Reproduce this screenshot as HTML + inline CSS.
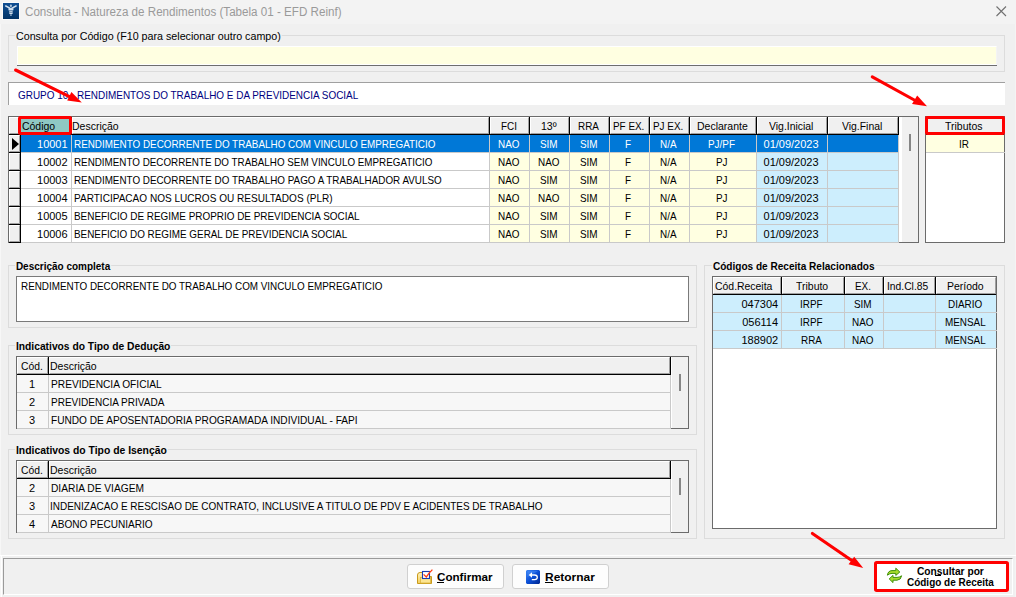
<!DOCTYPE html>
<html><head><meta charset="utf-8"><style>
html,body{margin:0;padding:0;}
body{width:1016px;height:597px;overflow:hidden;position:relative;background:#f0f0f0;font-family:'Liberation Sans', sans-serif;}
body>div,body>svg{position:absolute;}
.t{white-space:pre;}
</style></head><body>
<div style="left:0px;top:0px;width:1016px;height:24px;background:#f3f3f3"></div>
<div style="left:0px;top:24px;width:1px;height:573px;background:#f7f7f7"></div>
<div style="left:1015px;top:24px;width:1px;height:573px;background:#f4f4f4"></div>
<div style="left:8px;top:35px;width:997px;height:37px;border:1px solid #dcdcdc;box-sizing:border-box"></div>
<div style="left:17px;top:46px;width:980px;height:19px;background:#ffffe1;border:1px solid #fff;border-right-color:#f4f4f4;box-sizing:border-box"></div>
<div style="left:17px;top:65px;width:980px;height:1px;background:#6e6e6e"></div>
<div style="left:8px;top:82px;width:997px;height:23px;background:#fff;border-top:1px solid #a0a0a0;border-left:1px solid #a0a0a0;box-sizing:border-box"></div>
<div style="left:8px;top:116px;width:911px;height:127px;background:#fff;border:1px solid #6b6b6b;box-sizing:border-box"></div>
<div style="left:9px;top:117px;width:11px;height:17px;background:#f0f0f0;border-top:1px solid #fff;border-left:1px solid #fff;border-bottom:1px solid #a0a0a0;border-right:1px solid #a0a0a0;box-sizing:border-box"></div>
<div style="left:20px;top:117px;width:1px;height:18px;background:#000"></div>
<div style="left:21px;top:117px;width:50px;height:17px;background:#f0f0f0;border-top:1px solid #fff;border-left:1px solid #fff;border-bottom:1px solid #a0a0a0;border-right:1px solid #a0a0a0;box-sizing:border-box"></div>
<div style="left:71px;top:117px;width:1px;height:18px;background:#000"></div>
<div style="left:72px;top:117px;width:417px;height:17px;background:#f0f0f0;border-top:1px solid #fff;border-left:1px solid #fff;border-bottom:1px solid #a0a0a0;border-right:1px solid #a0a0a0;box-sizing:border-box"></div>
<div style="left:489px;top:117px;width:1px;height:18px;background:#000"></div>
<div style="left:490px;top:117px;width:39px;height:17px;background:#f0f0f0;border-top:1px solid #fff;border-left:1px solid #fff;border-bottom:1px solid #a0a0a0;border-right:1px solid #a0a0a0;box-sizing:border-box"></div>
<div style="left:529px;top:117px;width:1px;height:18px;background:#000"></div>
<div style="left:530px;top:117px;width:39px;height:17px;background:#f0f0f0;border-top:1px solid #fff;border-left:1px solid #fff;border-bottom:1px solid #a0a0a0;border-right:1px solid #a0a0a0;box-sizing:border-box"></div>
<div style="left:569px;top:117px;width:1px;height:18px;background:#000"></div>
<div style="left:570px;top:117px;width:39px;height:17px;background:#f0f0f0;border-top:1px solid #fff;border-left:1px solid #fff;border-bottom:1px solid #a0a0a0;border-right:1px solid #a0a0a0;box-sizing:border-box"></div>
<div style="left:609px;top:117px;width:1px;height:18px;background:#000"></div>
<div style="left:610px;top:117px;width:39px;height:17px;background:#f0f0f0;border-top:1px solid #fff;border-left:1px solid #fff;border-bottom:1px solid #a0a0a0;border-right:1px solid #a0a0a0;box-sizing:border-box"></div>
<div style="left:649px;top:117px;width:1px;height:18px;background:#000"></div>
<div style="left:650px;top:117px;width:39px;height:17px;background:#f0f0f0;border-top:1px solid #fff;border-left:1px solid #fff;border-bottom:1px solid #a0a0a0;border-right:1px solid #a0a0a0;box-sizing:border-box"></div>
<div style="left:689px;top:117px;width:1px;height:18px;background:#000"></div>
<div style="left:690px;top:117px;width:66px;height:17px;background:#f0f0f0;border-top:1px solid #fff;border-left:1px solid #fff;border-bottom:1px solid #a0a0a0;border-right:1px solid #a0a0a0;box-sizing:border-box"></div>
<div style="left:756px;top:117px;width:1px;height:18px;background:#000"></div>
<div style="left:757px;top:117px;width:70px;height:17px;background:#f0f0f0;border-top:1px solid #fff;border-left:1px solid #fff;border-bottom:1px solid #a0a0a0;border-right:1px solid #a0a0a0;box-sizing:border-box"></div>
<div style="left:827px;top:117px;width:1px;height:18px;background:#000"></div>
<div style="left:828px;top:117px;width:70px;height:17px;background:#f0f0f0;border-top:1px solid #fff;border-left:1px solid #fff;border-bottom:1px solid #a0a0a0;border-right:1px solid #a0a0a0;box-sizing:border-box"></div>
<div style="left:898px;top:117px;width:1px;height:18px;background:#000"></div>
<div style="left:9px;top:134px;width:890px;height:1px;background:#000"></div>
<div style="left:9px;top:135px;width:11px;height:17px;background:#f0f0f0;border-top:1px solid #fff;border-left:1px solid #fff;border-bottom:1px solid #a0a0a0;border-right:1px solid #a0a0a0;box-sizing:border-box"></div>
<div style="left:20px;top:135px;width:1px;height:18px;background:#000"></div>
<div style="left:9px;top:152px;width:11px;height:1px;background:#000"></div>
<div style="left:21px;top:135px;width:50px;height:17px;background:#0078d7"></div>
<div style="left:71px;top:135px;width:1px;height:18px;background:#c9c9c9"></div>
<div style="left:72px;top:135px;width:417px;height:17px;background:#0078d7"></div>
<div style="left:489px;top:135px;width:1px;height:18px;background:#c9c9c9"></div>
<div style="left:490px;top:135px;width:39px;height:17px;background:#0078d7"></div>
<div style="left:529px;top:135px;width:1px;height:18px;background:#c9c9c9"></div>
<div style="left:530px;top:135px;width:39px;height:17px;background:#0078d7"></div>
<div style="left:569px;top:135px;width:1px;height:18px;background:#c9c9c9"></div>
<div style="left:570px;top:135px;width:39px;height:17px;background:#0078d7"></div>
<div style="left:609px;top:135px;width:1px;height:18px;background:#c9c9c9"></div>
<div style="left:610px;top:135px;width:39px;height:17px;background:#0078d7"></div>
<div style="left:649px;top:135px;width:1px;height:18px;background:#c9c9c9"></div>
<div style="left:650px;top:135px;width:39px;height:17px;background:#0078d7"></div>
<div style="left:689px;top:135px;width:1px;height:18px;background:#c9c9c9"></div>
<div style="left:690px;top:135px;width:66px;height:17px;background:#0078d7"></div>
<div style="left:756px;top:135px;width:1px;height:18px;background:#c9c9c9"></div>
<div style="left:757px;top:135px;width:70px;height:17px;background:#0078d7"></div>
<div style="left:827px;top:135px;width:1px;height:18px;background:#c9c9c9"></div>
<div style="left:828px;top:135px;width:70px;height:17px;background:#0078d7"></div>
<div style="left:898px;top:135px;width:1px;height:18px;background:#c9c9c9"></div>
<div style="left:21px;top:152px;width:878px;height:1px;background:#c9c9c9"></div>
<div style="left:9px;top:153px;width:11px;height:17px;background:#f0f0f0;border-top:1px solid #fff;border-left:1px solid #fff;border-bottom:1px solid #a0a0a0;border-right:1px solid #a0a0a0;box-sizing:border-box"></div>
<div style="left:20px;top:153px;width:1px;height:18px;background:#000"></div>
<div style="left:9px;top:170px;width:11px;height:1px;background:#000"></div>
<div style="left:21px;top:153px;width:50px;height:17px;background:#fff"></div>
<div style="left:71px;top:153px;width:1px;height:18px;background:#c9c9c9"></div>
<div style="left:72px;top:153px;width:417px;height:17px;background:#fff"></div>
<div style="left:489px;top:153px;width:1px;height:18px;background:#c9c9c9"></div>
<div style="left:490px;top:153px;width:39px;height:17px;background:#ffffe1"></div>
<div style="left:529px;top:153px;width:1px;height:18px;background:#c9c9c9"></div>
<div style="left:530px;top:153px;width:39px;height:17px;background:#ffffe1"></div>
<div style="left:569px;top:153px;width:1px;height:18px;background:#c9c9c9"></div>
<div style="left:570px;top:153px;width:39px;height:17px;background:#ffffe1"></div>
<div style="left:609px;top:153px;width:1px;height:18px;background:#c9c9c9"></div>
<div style="left:610px;top:153px;width:39px;height:17px;background:#ffffe1"></div>
<div style="left:649px;top:153px;width:1px;height:18px;background:#c9c9c9"></div>
<div style="left:650px;top:153px;width:39px;height:17px;background:#ffffe1"></div>
<div style="left:689px;top:153px;width:1px;height:18px;background:#c9c9c9"></div>
<div style="left:690px;top:153px;width:66px;height:17px;background:#ffffe1"></div>
<div style="left:756px;top:153px;width:1px;height:18px;background:#c9c9c9"></div>
<div style="left:757px;top:153px;width:70px;height:17px;background:#cdeefd"></div>
<div style="left:827px;top:153px;width:1px;height:18px;background:#c9c9c9"></div>
<div style="left:828px;top:153px;width:70px;height:17px;background:#cdeefd"></div>
<div style="left:898px;top:153px;width:1px;height:18px;background:#c9c9c9"></div>
<div style="left:21px;top:170px;width:878px;height:1px;background:#c9c9c9"></div>
<div style="left:9px;top:171px;width:11px;height:17px;background:#f0f0f0;border-top:1px solid #fff;border-left:1px solid #fff;border-bottom:1px solid #a0a0a0;border-right:1px solid #a0a0a0;box-sizing:border-box"></div>
<div style="left:20px;top:171px;width:1px;height:18px;background:#000"></div>
<div style="left:9px;top:188px;width:11px;height:1px;background:#000"></div>
<div style="left:21px;top:171px;width:50px;height:17px;background:#fff"></div>
<div style="left:71px;top:171px;width:1px;height:18px;background:#c9c9c9"></div>
<div style="left:72px;top:171px;width:417px;height:17px;background:#fff"></div>
<div style="left:489px;top:171px;width:1px;height:18px;background:#c9c9c9"></div>
<div style="left:490px;top:171px;width:39px;height:17px;background:#ffffe1"></div>
<div style="left:529px;top:171px;width:1px;height:18px;background:#c9c9c9"></div>
<div style="left:530px;top:171px;width:39px;height:17px;background:#ffffe1"></div>
<div style="left:569px;top:171px;width:1px;height:18px;background:#c9c9c9"></div>
<div style="left:570px;top:171px;width:39px;height:17px;background:#ffffe1"></div>
<div style="left:609px;top:171px;width:1px;height:18px;background:#c9c9c9"></div>
<div style="left:610px;top:171px;width:39px;height:17px;background:#ffffe1"></div>
<div style="left:649px;top:171px;width:1px;height:18px;background:#c9c9c9"></div>
<div style="left:650px;top:171px;width:39px;height:17px;background:#ffffe1"></div>
<div style="left:689px;top:171px;width:1px;height:18px;background:#c9c9c9"></div>
<div style="left:690px;top:171px;width:66px;height:17px;background:#ffffe1"></div>
<div style="left:756px;top:171px;width:1px;height:18px;background:#c9c9c9"></div>
<div style="left:757px;top:171px;width:70px;height:17px;background:#cdeefd"></div>
<div style="left:827px;top:171px;width:1px;height:18px;background:#c9c9c9"></div>
<div style="left:828px;top:171px;width:70px;height:17px;background:#cdeefd"></div>
<div style="left:898px;top:171px;width:1px;height:18px;background:#c9c9c9"></div>
<div style="left:21px;top:188px;width:878px;height:1px;background:#c9c9c9"></div>
<div style="left:9px;top:189px;width:11px;height:17px;background:#f0f0f0;border-top:1px solid #fff;border-left:1px solid #fff;border-bottom:1px solid #a0a0a0;border-right:1px solid #a0a0a0;box-sizing:border-box"></div>
<div style="left:20px;top:189px;width:1px;height:18px;background:#000"></div>
<div style="left:9px;top:206px;width:11px;height:1px;background:#000"></div>
<div style="left:21px;top:189px;width:50px;height:17px;background:#fff"></div>
<div style="left:71px;top:189px;width:1px;height:18px;background:#c9c9c9"></div>
<div style="left:72px;top:189px;width:417px;height:17px;background:#fff"></div>
<div style="left:489px;top:189px;width:1px;height:18px;background:#c9c9c9"></div>
<div style="left:490px;top:189px;width:39px;height:17px;background:#ffffe1"></div>
<div style="left:529px;top:189px;width:1px;height:18px;background:#c9c9c9"></div>
<div style="left:530px;top:189px;width:39px;height:17px;background:#ffffe1"></div>
<div style="left:569px;top:189px;width:1px;height:18px;background:#c9c9c9"></div>
<div style="left:570px;top:189px;width:39px;height:17px;background:#ffffe1"></div>
<div style="left:609px;top:189px;width:1px;height:18px;background:#c9c9c9"></div>
<div style="left:610px;top:189px;width:39px;height:17px;background:#ffffe1"></div>
<div style="left:649px;top:189px;width:1px;height:18px;background:#c9c9c9"></div>
<div style="left:650px;top:189px;width:39px;height:17px;background:#ffffe1"></div>
<div style="left:689px;top:189px;width:1px;height:18px;background:#c9c9c9"></div>
<div style="left:690px;top:189px;width:66px;height:17px;background:#ffffe1"></div>
<div style="left:756px;top:189px;width:1px;height:18px;background:#c9c9c9"></div>
<div style="left:757px;top:189px;width:70px;height:17px;background:#cdeefd"></div>
<div style="left:827px;top:189px;width:1px;height:18px;background:#c9c9c9"></div>
<div style="left:828px;top:189px;width:70px;height:17px;background:#cdeefd"></div>
<div style="left:898px;top:189px;width:1px;height:18px;background:#c9c9c9"></div>
<div style="left:21px;top:206px;width:878px;height:1px;background:#c9c9c9"></div>
<div style="left:9px;top:207px;width:11px;height:17px;background:#f0f0f0;border-top:1px solid #fff;border-left:1px solid #fff;border-bottom:1px solid #a0a0a0;border-right:1px solid #a0a0a0;box-sizing:border-box"></div>
<div style="left:20px;top:207px;width:1px;height:18px;background:#000"></div>
<div style="left:9px;top:224px;width:11px;height:1px;background:#000"></div>
<div style="left:21px;top:207px;width:50px;height:17px;background:#fff"></div>
<div style="left:71px;top:207px;width:1px;height:18px;background:#c9c9c9"></div>
<div style="left:72px;top:207px;width:417px;height:17px;background:#fff"></div>
<div style="left:489px;top:207px;width:1px;height:18px;background:#c9c9c9"></div>
<div style="left:490px;top:207px;width:39px;height:17px;background:#ffffe1"></div>
<div style="left:529px;top:207px;width:1px;height:18px;background:#c9c9c9"></div>
<div style="left:530px;top:207px;width:39px;height:17px;background:#ffffe1"></div>
<div style="left:569px;top:207px;width:1px;height:18px;background:#c9c9c9"></div>
<div style="left:570px;top:207px;width:39px;height:17px;background:#ffffe1"></div>
<div style="left:609px;top:207px;width:1px;height:18px;background:#c9c9c9"></div>
<div style="left:610px;top:207px;width:39px;height:17px;background:#ffffe1"></div>
<div style="left:649px;top:207px;width:1px;height:18px;background:#c9c9c9"></div>
<div style="left:650px;top:207px;width:39px;height:17px;background:#ffffe1"></div>
<div style="left:689px;top:207px;width:1px;height:18px;background:#c9c9c9"></div>
<div style="left:690px;top:207px;width:66px;height:17px;background:#ffffe1"></div>
<div style="left:756px;top:207px;width:1px;height:18px;background:#c9c9c9"></div>
<div style="left:757px;top:207px;width:70px;height:17px;background:#cdeefd"></div>
<div style="left:827px;top:207px;width:1px;height:18px;background:#c9c9c9"></div>
<div style="left:828px;top:207px;width:70px;height:17px;background:#cdeefd"></div>
<div style="left:898px;top:207px;width:1px;height:18px;background:#c9c9c9"></div>
<div style="left:21px;top:224px;width:878px;height:1px;background:#c9c9c9"></div>
<div style="left:9px;top:225px;width:11px;height:17px;background:#f0f0f0;border-top:1px solid #fff;border-left:1px solid #fff;border-bottom:1px solid #a0a0a0;border-right:1px solid #a0a0a0;box-sizing:border-box"></div>
<div style="left:20px;top:225px;width:1px;height:18px;background:#000"></div>
<div style="left:9px;top:242px;width:11px;height:1px;background:#000"></div>
<div style="left:21px;top:225px;width:50px;height:17px;background:#fff"></div>
<div style="left:71px;top:225px;width:1px;height:18px;background:#c9c9c9"></div>
<div style="left:72px;top:225px;width:417px;height:17px;background:#fff"></div>
<div style="left:489px;top:225px;width:1px;height:18px;background:#c9c9c9"></div>
<div style="left:490px;top:225px;width:39px;height:17px;background:#ffffe1"></div>
<div style="left:529px;top:225px;width:1px;height:18px;background:#c9c9c9"></div>
<div style="left:530px;top:225px;width:39px;height:17px;background:#ffffe1"></div>
<div style="left:569px;top:225px;width:1px;height:18px;background:#c9c9c9"></div>
<div style="left:570px;top:225px;width:39px;height:17px;background:#ffffe1"></div>
<div style="left:609px;top:225px;width:1px;height:18px;background:#c9c9c9"></div>
<div style="left:610px;top:225px;width:39px;height:17px;background:#ffffe1"></div>
<div style="left:649px;top:225px;width:1px;height:18px;background:#c9c9c9"></div>
<div style="left:650px;top:225px;width:39px;height:17px;background:#ffffe1"></div>
<div style="left:689px;top:225px;width:1px;height:18px;background:#c9c9c9"></div>
<div style="left:690px;top:225px;width:66px;height:17px;background:#ffffe1"></div>
<div style="left:756px;top:225px;width:1px;height:18px;background:#c9c9c9"></div>
<div style="left:757px;top:225px;width:70px;height:17px;background:#cdeefd"></div>
<div style="left:827px;top:225px;width:1px;height:18px;background:#c9c9c9"></div>
<div style="left:828px;top:225px;width:70px;height:17px;background:#cdeefd"></div>
<div style="left:898px;top:225px;width:1px;height:18px;background:#c9c9c9"></div>
<div style="left:21px;top:242px;width:878px;height:1px;background:#c9c9c9"></div>
<div style="left:899px;top:117px;width:19px;height:125px;background:#f0f0f0;border-left:3px solid #fff;box-sizing:border-box"></div>
<div style="left:909px;top:134px;width:2px;height:17px;background:#858585"></div>
<div style="left:21px;top:119px;width:48px;height:13px;background:#8fc8c4"></div>
<svg style="left:11.5px;top:137.5px;width:8px;height:12px" width="8" height="12"><path d="M0 0 L7 6 L0 12 Z" fill="#000"/></svg>
<div style="left:925px;top:116px;width:80px;height:127px;background:#fff;border:1px solid #6b6b6b;box-sizing:border-box"></div>
<div style="left:926px;top:117px;width:78px;height:17px;background:#f0f0f0;border-top:1px solid #fff;border-left:1px solid #fff;border-bottom:1px solid #a0a0a0;border-right:1px solid #a0a0a0;box-sizing:border-box"></div>
<div style="left:926px;top:134px;width:78px;height:1px;background:#000"></div>
<div style="left:926px;top:135px;width:78px;height:17px;background:#ffffe1"></div>
<div style="left:926px;top:152px;width:79px;height:1px;background:#c9c9c9"></div>
<div style="left:8px;top:265px;width:689px;height:63px;border:1px solid #dcdcdc;box-sizing:border-box"></div>
<div style="left:16px;top:276px;width:673px;height:46px;background:#fff;border:1px solid #7a7a7a;box-sizing:border-box"></div>
<div style="left:8px;top:345px;width:689px;height:90px;border:1px solid #dcdcdc;box-sizing:border-box"></div>
<div style="left:16px;top:356px;width:673px;height:73px;background:#fff;border:1px solid #6b6b6b;box-sizing:border-box"></div>
<div style="left:17px;top:357px;width:31px;height:17px;background:#f0f0f0;border-top:1px solid #fff;border-left:1px solid #fff;border-bottom:1px solid #a0a0a0;border-right:1px solid #a0a0a0;box-sizing:border-box"></div>
<div style="left:48px;top:357px;width:1px;height:18px;background:#000"></div>
<div style="left:49px;top:357px;width:621px;height:17px;background:#f0f0f0;border-top:1px solid #fff;border-left:1px solid #fff;border-bottom:1px solid #a0a0a0;border-right:1px solid #a0a0a0;box-sizing:border-box"></div>
<div style="left:670px;top:357px;width:1px;height:18px;background:#000"></div>
<div style="left:17px;top:374px;width:654px;height:1px;background:#000"></div>
<div style="left:17px;top:375px;width:31px;height:17px;background:#f7f7f7"></div>
<div style="left:48px;top:375px;width:1px;height:18px;background:#c9c9c9"></div>
<div style="left:49px;top:375px;width:621px;height:17px;background:#f7f7f7"></div>
<div style="left:670px;top:375px;width:1px;height:18px;background:#c9c9c9"></div>
<div style="left:17px;top:392px;width:654px;height:1px;background:#c9c9c9"></div>
<div style="left:17px;top:393px;width:31px;height:17px;background:#f7f7f7"></div>
<div style="left:48px;top:393px;width:1px;height:18px;background:#c9c9c9"></div>
<div style="left:49px;top:393px;width:621px;height:17px;background:#f7f7f7"></div>
<div style="left:670px;top:393px;width:1px;height:18px;background:#c9c9c9"></div>
<div style="left:17px;top:410px;width:654px;height:1px;background:#c9c9c9"></div>
<div style="left:17px;top:411px;width:31px;height:17px;background:#f7f7f7"></div>
<div style="left:48px;top:411px;width:1px;height:18px;background:#c9c9c9"></div>
<div style="left:49px;top:411px;width:621px;height:17px;background:#f7f7f7"></div>
<div style="left:670px;top:411px;width:1px;height:18px;background:#c9c9c9"></div>
<div style="left:17px;top:428px;width:654px;height:1px;background:#c9c9c9"></div>
<div style="left:671px;top:357px;width:17px;height:71px;background:#f0f0f0;border-left:1px solid #fff;box-sizing:border-box"></div>
<div style="left:679px;top:374px;width:2px;height:17px;background:#858585"></div>
<div style="left:8px;top:449px;width:689px;height:90px;border:1px solid #dcdcdc;box-sizing:border-box"></div>
<div style="left:16px;top:460px;width:673px;height:73px;background:#fff;border:1px solid #6b6b6b;box-sizing:border-box"></div>
<div style="left:17px;top:461px;width:31px;height:17px;background:#f0f0f0;border-top:1px solid #fff;border-left:1px solid #fff;border-bottom:1px solid #a0a0a0;border-right:1px solid #a0a0a0;box-sizing:border-box"></div>
<div style="left:48px;top:461px;width:1px;height:18px;background:#000"></div>
<div style="left:49px;top:461px;width:621px;height:17px;background:#f0f0f0;border-top:1px solid #fff;border-left:1px solid #fff;border-bottom:1px solid #a0a0a0;border-right:1px solid #a0a0a0;box-sizing:border-box"></div>
<div style="left:670px;top:461px;width:1px;height:18px;background:#000"></div>
<div style="left:17px;top:478px;width:654px;height:1px;background:#000"></div>
<div style="left:17px;top:479px;width:31px;height:17px;background:#f7f7f7"></div>
<div style="left:48px;top:479px;width:1px;height:18px;background:#c9c9c9"></div>
<div style="left:49px;top:479px;width:621px;height:17px;background:#f7f7f7"></div>
<div style="left:670px;top:479px;width:1px;height:18px;background:#c9c9c9"></div>
<div style="left:17px;top:496px;width:654px;height:1px;background:#c9c9c9"></div>
<div style="left:17px;top:497px;width:31px;height:17px;background:#f7f7f7"></div>
<div style="left:48px;top:497px;width:1px;height:18px;background:#c9c9c9"></div>
<div style="left:49px;top:497px;width:621px;height:17px;background:#f7f7f7"></div>
<div style="left:670px;top:497px;width:1px;height:18px;background:#c9c9c9"></div>
<div style="left:17px;top:514px;width:654px;height:1px;background:#c9c9c9"></div>
<div style="left:17px;top:515px;width:31px;height:17px;background:#f7f7f7"></div>
<div style="left:48px;top:515px;width:1px;height:18px;background:#c9c9c9"></div>
<div style="left:49px;top:515px;width:621px;height:17px;background:#f7f7f7"></div>
<div style="left:670px;top:515px;width:1px;height:18px;background:#c9c9c9"></div>
<div style="left:17px;top:532px;width:654px;height:1px;background:#c9c9c9"></div>
<div style="left:671px;top:461px;width:17px;height:71px;background:#f0f0f0;border-left:1px solid #fff;box-sizing:border-box"></div>
<div style="left:679px;top:478px;width:2px;height:17px;background:#858585"></div>
<div style="left:704px;top:265px;width:301px;height:274px;border:1px solid #dcdcdc;box-sizing:border-box"></div>
<div style="left:712px;top:276px;width:285px;height:253px;background:#fff;border:1px solid #6b6b6b;box-sizing:border-box"></div>
<div style="left:713px;top:277px;width:68px;height:17px;background:#f0f0f0;border-top:1px solid #fff;border-left:1px solid #fff;border-bottom:1px solid #a0a0a0;border-right:1px solid #a0a0a0;box-sizing:border-box"></div>
<div style="left:781px;top:277px;width:1px;height:18px;background:#000"></div>
<div style="left:782px;top:277px;width:62px;height:17px;background:#f0f0f0;border-top:1px solid #fff;border-left:1px solid #fff;border-bottom:1px solid #a0a0a0;border-right:1px solid #a0a0a0;box-sizing:border-box"></div>
<div style="left:844px;top:277px;width:1px;height:18px;background:#000"></div>
<div style="left:845px;top:277px;width:38px;height:17px;background:#f0f0f0;border-top:1px solid #fff;border-left:1px solid #fff;border-bottom:1px solid #a0a0a0;border-right:1px solid #a0a0a0;box-sizing:border-box"></div>
<div style="left:883px;top:277px;width:1px;height:18px;background:#000"></div>
<div style="left:884px;top:277px;width:51px;height:17px;background:#f0f0f0;border-top:1px solid #fff;border-left:1px solid #fff;border-bottom:1px solid #a0a0a0;border-right:1px solid #a0a0a0;box-sizing:border-box"></div>
<div style="left:935px;top:277px;width:1px;height:18px;background:#000"></div>
<div style="left:936px;top:277px;width:60px;height:17px;background:#f0f0f0;border-top:1px solid #fff;border-left:1px solid #fff;border-bottom:1px solid #a0a0a0;border-right:1px solid #a0a0a0;box-sizing:border-box"></div>
<div style="left:713px;top:294px;width:283px;height:1px;background:#000"></div>
<div style="left:713px;top:295px;width:68px;height:17px;background:#cdeefd"></div>
<div style="left:781px;top:295px;width:1px;height:18px;background:#c9c9c9"></div>
<div style="left:782px;top:295px;width:62px;height:17px;background:#cdeefd"></div>
<div style="left:844px;top:295px;width:1px;height:18px;background:#c9c9c9"></div>
<div style="left:845px;top:295px;width:38px;height:17px;background:#cdeefd"></div>
<div style="left:883px;top:295px;width:1px;height:18px;background:#c9c9c9"></div>
<div style="left:884px;top:295px;width:51px;height:17px;background:#cdeefd"></div>
<div style="left:935px;top:295px;width:1px;height:18px;background:#c9c9c9"></div>
<div style="left:936px;top:295px;width:60px;height:17px;background:#cdeefd"></div>
<div style="left:713px;top:312px;width:284px;height:1px;background:#c9c9c9"></div>
<div style="left:713px;top:313px;width:68px;height:17px;background:#cdeefd"></div>
<div style="left:781px;top:313px;width:1px;height:18px;background:#c9c9c9"></div>
<div style="left:782px;top:313px;width:62px;height:17px;background:#cdeefd"></div>
<div style="left:844px;top:313px;width:1px;height:18px;background:#c9c9c9"></div>
<div style="left:845px;top:313px;width:38px;height:17px;background:#cdeefd"></div>
<div style="left:883px;top:313px;width:1px;height:18px;background:#c9c9c9"></div>
<div style="left:884px;top:313px;width:51px;height:17px;background:#cdeefd"></div>
<div style="left:935px;top:313px;width:1px;height:18px;background:#c9c9c9"></div>
<div style="left:936px;top:313px;width:60px;height:17px;background:#cdeefd"></div>
<div style="left:713px;top:330px;width:284px;height:1px;background:#c9c9c9"></div>
<div style="left:713px;top:331px;width:68px;height:17px;background:#cdeefd"></div>
<div style="left:781px;top:331px;width:1px;height:18px;background:#c9c9c9"></div>
<div style="left:782px;top:331px;width:62px;height:17px;background:#cdeefd"></div>
<div style="left:844px;top:331px;width:1px;height:18px;background:#c9c9c9"></div>
<div style="left:845px;top:331px;width:38px;height:17px;background:#cdeefd"></div>
<div style="left:883px;top:331px;width:1px;height:18px;background:#c9c9c9"></div>
<div style="left:884px;top:331px;width:51px;height:17px;background:#cdeefd"></div>
<div style="left:935px;top:331px;width:1px;height:18px;background:#c9c9c9"></div>
<div style="left:936px;top:331px;width:60px;height:17px;background:#cdeefd"></div>
<div style="left:713px;top:348px;width:284px;height:1px;background:#c9c9c9"></div>
<div style="left:0px;top:555px;width:1016px;height:1px;background:#fff"></div>
<div style="left:3px;top:558px;width:1010px;height:37px;border-top:1px solid #9a9a9a;border-left:1px solid #9a9a9a;border-right:1px solid #fff;border-bottom:1px solid #fff;box-sizing:border-box"></div>
<div style="left:1px;top:556px;width:1px;height:41px;background:#fff"></div>
<div style="left:407px;top:564px;width:97px;height:25px;background:#fdfdfd;border:1px solid #d0d0d0;border-radius:3px;box-sizing:border-box"></div>
<div style="left:512px;top:564px;width:97px;height:25px;background:#fdfdfd;border:1px solid #d0d0d0;border-radius:3px;box-sizing:border-box"></div>
<div style="left:437px;top:582px;width:7px;height:1px;background:#000"></div>
<div style="left:545px;top:582px;width:8px;height:1px;background:#000"></div>
<div style="left:877px;top:564px;width:129px;height:25px;background:#fff"></div>
<div style="left:935px;top:575px;width:6px;height:1px;background:#000"></div>
<div class="t" style="left:25.00px;top:6px;font:12.5px 'Liberation Sans', sans-serif;line-height:13px;color:#9a9a9a;transform:scaleX(0.9298);transform-origin:0 0;">Consulta - Natureza de Rendimentos (Tabela 01 - EFD Reinf)</div>
<div class="t" style="left:15.60px;top:30px;font:11px 'Liberation Sans', sans-serif;line-height:13px;color:#000;transform:scaleX(0.9734);transform-origin:0 0;background:#f0f0f0;padding:0 1px;margin-left:-1px">Consulta por Código (F10 para selecionar outro campo)</div>
<div class="t" style="left:18.00px;top:89px;font:11px 'Liberation Sans', sans-serif;line-height:13px;color:#000080;transform:scaleX(0.9031);transform-origin:0 0;">GRUPO 10 - RENDIMENTOS DO TRABALHO E DA PREVIDENCIA SOCIAL</div>
<div class="t" style="left:22.00px;top:120px;font:11px 'Liberation Sans', sans-serif;line-height:13px;color:#000;transform:scaleX(0.9500);transform-origin:0 0;">Código</div>
<div class="t" style="left:72.00px;top:120px;font:11px 'Liberation Sans', sans-serif;line-height:13px;color:#000;transform:scaleX(0.9533);transform-origin:0 0;">Descrição</div>
<div class="t" style="left:500.55px;top:120px;font:11px 'Liberation Sans', sans-serif;line-height:13px;color:#000;transform:scaleX(0.9000);transform-origin:0 0;">FCI</div>
<div class="t" style="left:540.71px;top:120px;font:11px 'Liberation Sans', sans-serif;line-height:13px;color:#000;transform:scaleX(0.9600);transform-origin:0 0;">13º</div>
<div class="t" style="left:577.75px;top:120px;font:11px 'Liberation Sans', sans-serif;line-height:13px;color:#000;transform:scaleX(0.9000);transform-origin:0 0;">RRA</div>
<div class="t" style="left:612.85px;top:120px;font:11px 'Liberation Sans', sans-serif;line-height:13px;color:#000;transform:scaleX(0.9000);transform-origin:0 0;">PF EX.</div>
<div class="t" style="left:653.39px;top:120px;font:11px 'Liberation Sans', sans-serif;line-height:13px;color:#000;transform:scaleX(0.9000);transform-origin:0 0;">PJ EX.</div>
<div class="t" style="left:696.68px;top:120px;font:11px 'Liberation Sans', sans-serif;line-height:13px;color:#000;transform:scaleX(0.9540);transform-origin:0 0;">Declarante</div>
<div class="t" style="left:768.99px;top:120px;font:11px 'Liberation Sans', sans-serif;line-height:13px;color:#000;transform:scaleX(0.9480);transform-origin:0 0;">Vig.Inicial</div>
<div class="t" style="left:842.08px;top:120px;font:11px 'Liberation Sans', sans-serif;line-height:13px;color:#000;transform:scaleX(0.9450);transform-origin:0 0;">Vig.Final</div>
<div class="t" style="left:37.03px;top:138px;font:11px 'Liberation Sans', sans-serif;line-height:13px;color:#fff;">10001</div>
<div class="t" style="left:74.00px;top:138px;font:11px 'Liberation Sans', sans-serif;line-height:13px;color:#fff;transform:scaleX(0.8973);transform-origin:0 0;">RENDIMENTO DECORRENTE DO TRABALHO COM VINCULO EMPREGATICIO</div>
<div class="t" style="left:497.57px;top:138px;font:11px 'Liberation Sans', sans-serif;line-height:13px;color:#fff;transform:scaleX(0.9000);transform-origin:0 0;">NAO</div>
<div class="t" style="left:539.77px;top:138px;font:11px 'Liberation Sans', sans-serif;line-height:13px;color:#fff;transform:scaleX(0.9000);transform-origin:0 0;">SIM</div>
<div class="t" style="left:579.77px;top:138px;font:11px 'Liberation Sans', sans-serif;line-height:13px;color:#fff;transform:scaleX(0.9000);transform-origin:0 0;">SIM</div>
<div class="t" style="left:625.35px;top:138px;font:11px 'Liberation Sans', sans-serif;line-height:13px;color:#fff;transform:scaleX(0.9000);transform-origin:0 0;">F</div>
<div class="t" style="left:659.95px;top:138px;font:11px 'Liberation Sans', sans-serif;line-height:13px;color:#fff;transform:scaleX(0.9000);transform-origin:0 0;">N/A</div>
<div class="t" style="left:708.40px;top:138px;font:11px 'Liberation Sans', sans-serif;line-height:13px;color:#fff;transform:scaleX(0.9000);transform-origin:0 0;">PJ/PF</div>
<div class="t" style="left:763.53px;top:138px;font:11px 'Liberation Sans', sans-serif;line-height:13px;color:#fff;">01/09/2023</div>
<div class="t" style="left:37.03px;top:156px;font:11px 'Liberation Sans', sans-serif;line-height:13px;color:#000;">10002</div>
<div class="t" style="left:74.00px;top:156px;font:11px 'Liberation Sans', sans-serif;line-height:13px;color:#000;transform:scaleX(0.8940);transform-origin:0 0;">RENDIMENTO DECORRENTE DO TRABALHO SEM VINCULO EMPREGATICIO</div>
<div class="t" style="left:497.57px;top:156px;font:11px 'Liberation Sans', sans-serif;line-height:13px;color:#000;transform:scaleX(0.9000);transform-origin:0 0;">NAO</div>
<div class="t" style="left:537.57px;top:156px;font:11px 'Liberation Sans', sans-serif;line-height:13px;color:#000;transform:scaleX(0.9000);transform-origin:0 0;">NAO</div>
<div class="t" style="left:579.77px;top:156px;font:11px 'Liberation Sans', sans-serif;line-height:13px;color:#000;transform:scaleX(0.9000);transform-origin:0 0;">SIM</div>
<div class="t" style="left:625.35px;top:156px;font:11px 'Liberation Sans', sans-serif;line-height:13px;color:#000;transform:scaleX(0.9000);transform-origin:0 0;">F</div>
<div class="t" style="left:659.95px;top:156px;font:11px 'Liberation Sans', sans-serif;line-height:13px;color:#000;transform:scaleX(0.9000);transform-origin:0 0;">N/A</div>
<div class="t" style="left:716.45px;top:156px;font:11px 'Liberation Sans', sans-serif;line-height:13px;color:#000;transform:scaleX(0.9000);transform-origin:0 0;">PJ</div>
<div class="t" style="left:763.53px;top:156px;font:11px 'Liberation Sans', sans-serif;line-height:13px;color:#000;">01/09/2023</div>
<div class="t" style="left:37.03px;top:174px;font:11px 'Liberation Sans', sans-serif;line-height:13px;color:#000;">10003</div>
<div class="t" style="left:74.00px;top:174px;font:11px 'Liberation Sans', sans-serif;line-height:13px;color:#000;transform:scaleX(0.8959);transform-origin:0 0;">RENDIMENTO DECORRENTE DO TRABALHO PAGO A TRABALHADOR AVULSO</div>
<div class="t" style="left:497.57px;top:174px;font:11px 'Liberation Sans', sans-serif;line-height:13px;color:#000;transform:scaleX(0.9000);transform-origin:0 0;">NAO</div>
<div class="t" style="left:539.77px;top:174px;font:11px 'Liberation Sans', sans-serif;line-height:13px;color:#000;transform:scaleX(0.9000);transform-origin:0 0;">SIM</div>
<div class="t" style="left:579.77px;top:174px;font:11px 'Liberation Sans', sans-serif;line-height:13px;color:#000;transform:scaleX(0.9000);transform-origin:0 0;">SIM</div>
<div class="t" style="left:625.35px;top:174px;font:11px 'Liberation Sans', sans-serif;line-height:13px;color:#000;transform:scaleX(0.9000);transform-origin:0 0;">F</div>
<div class="t" style="left:659.95px;top:174px;font:11px 'Liberation Sans', sans-serif;line-height:13px;color:#000;transform:scaleX(0.9000);transform-origin:0 0;">N/A</div>
<div class="t" style="left:716.45px;top:174px;font:11px 'Liberation Sans', sans-serif;line-height:13px;color:#000;transform:scaleX(0.9000);transform-origin:0 0;">PJ</div>
<div class="t" style="left:763.53px;top:174px;font:11px 'Liberation Sans', sans-serif;line-height:13px;color:#000;">01/09/2023</div>
<div class="t" style="left:37.03px;top:192px;font:11px 'Liberation Sans', sans-serif;line-height:13px;color:#000;">10004</div>
<div class="t" style="left:74.00px;top:192px;font:11px 'Liberation Sans', sans-serif;line-height:13px;color:#000;transform:scaleX(0.9132);transform-origin:0 0;">PARTICIPACAO NOS LUCROS OU RESULTADOS (PLR)</div>
<div class="t" style="left:497.57px;top:192px;font:11px 'Liberation Sans', sans-serif;line-height:13px;color:#000;transform:scaleX(0.9000);transform-origin:0 0;">NAO</div>
<div class="t" style="left:537.57px;top:192px;font:11px 'Liberation Sans', sans-serif;line-height:13px;color:#000;transform:scaleX(0.9000);transform-origin:0 0;">NAO</div>
<div class="t" style="left:579.77px;top:192px;font:11px 'Liberation Sans', sans-serif;line-height:13px;color:#000;transform:scaleX(0.9000);transform-origin:0 0;">SIM</div>
<div class="t" style="left:625.35px;top:192px;font:11px 'Liberation Sans', sans-serif;line-height:13px;color:#000;transform:scaleX(0.9000);transform-origin:0 0;">F</div>
<div class="t" style="left:659.95px;top:192px;font:11px 'Liberation Sans', sans-serif;line-height:13px;color:#000;transform:scaleX(0.9000);transform-origin:0 0;">N/A</div>
<div class="t" style="left:716.45px;top:192px;font:11px 'Liberation Sans', sans-serif;line-height:13px;color:#000;transform:scaleX(0.9000);transform-origin:0 0;">PJ</div>
<div class="t" style="left:763.53px;top:192px;font:11px 'Liberation Sans', sans-serif;line-height:13px;color:#000;">01/09/2023</div>
<div class="t" style="left:37.03px;top:210px;font:11px 'Liberation Sans', sans-serif;line-height:13px;color:#000;">10005</div>
<div class="t" style="left:74.00px;top:210px;font:11px 'Liberation Sans', sans-serif;line-height:13px;color:#000;transform:scaleX(0.9019);transform-origin:0 0;">BENEFICIO DE REGIME PROPRIO DE PREVIDENCIA SOCIAL</div>
<div class="t" style="left:497.57px;top:210px;font:11px 'Liberation Sans', sans-serif;line-height:13px;color:#000;transform:scaleX(0.9000);transform-origin:0 0;">NAO</div>
<div class="t" style="left:539.77px;top:210px;font:11px 'Liberation Sans', sans-serif;line-height:13px;color:#000;transform:scaleX(0.9000);transform-origin:0 0;">SIM</div>
<div class="t" style="left:579.77px;top:210px;font:11px 'Liberation Sans', sans-serif;line-height:13px;color:#000;transform:scaleX(0.9000);transform-origin:0 0;">SIM</div>
<div class="t" style="left:625.35px;top:210px;font:11px 'Liberation Sans', sans-serif;line-height:13px;color:#000;transform:scaleX(0.9000);transform-origin:0 0;">F</div>
<div class="t" style="left:659.95px;top:210px;font:11px 'Liberation Sans', sans-serif;line-height:13px;color:#000;transform:scaleX(0.9000);transform-origin:0 0;">N/A</div>
<div class="t" style="left:716.45px;top:210px;font:11px 'Liberation Sans', sans-serif;line-height:13px;color:#000;transform:scaleX(0.9000);transform-origin:0 0;">PJ</div>
<div class="t" style="left:763.53px;top:210px;font:11px 'Liberation Sans', sans-serif;line-height:13px;color:#000;">01/09/2023</div>
<div class="t" style="left:37.03px;top:228px;font:11px 'Liberation Sans', sans-serif;line-height:13px;color:#000;">10006</div>
<div class="t" style="left:74.00px;top:228px;font:11px 'Liberation Sans', sans-serif;line-height:13px;color:#000;transform:scaleX(0.8987);transform-origin:0 0;">BENEFICIO DO REGIME GERAL DE PREVIDENCIA SOCIAL</div>
<div class="t" style="left:497.57px;top:228px;font:11px 'Liberation Sans', sans-serif;line-height:13px;color:#000;transform:scaleX(0.9000);transform-origin:0 0;">NAO</div>
<div class="t" style="left:539.77px;top:228px;font:11px 'Liberation Sans', sans-serif;line-height:13px;color:#000;transform:scaleX(0.9000);transform-origin:0 0;">SIM</div>
<div class="t" style="left:579.77px;top:228px;font:11px 'Liberation Sans', sans-serif;line-height:13px;color:#000;transform:scaleX(0.9000);transform-origin:0 0;">SIM</div>
<div class="t" style="left:625.35px;top:228px;font:11px 'Liberation Sans', sans-serif;line-height:13px;color:#000;transform:scaleX(0.9000);transform-origin:0 0;">F</div>
<div class="t" style="left:659.95px;top:228px;font:11px 'Liberation Sans', sans-serif;line-height:13px;color:#000;transform:scaleX(0.9000);transform-origin:0 0;">N/A</div>
<div class="t" style="left:716.45px;top:228px;font:11px 'Liberation Sans', sans-serif;line-height:13px;color:#000;transform:scaleX(0.9000);transform-origin:0 0;">PJ</div>
<div class="t" style="left:763.53px;top:228px;font:11px 'Liberation Sans', sans-serif;line-height:13px;color:#000;">01/09/2023</div>
<div class="t" style="left:945.03px;top:120px;font:11px 'Liberation Sans', sans-serif;line-height:13px;color:#000;transform:scaleX(0.9525);transform-origin:0 0;">Tributos</div>
<div class="t" style="left:958.57px;top:138px;font:11px 'Liberation Sans', sans-serif;line-height:13px;color:#000;transform:scaleX(0.9000);transform-origin:0 0;">IR</div>
<div class="t" style="left:16.20px;top:260px;font:bold 11px 'Liberation Sans', sans-serif;line-height:13px;color:#000;transform:scaleX(0.9073);transform-origin:0 0;background:#f0f0f0;padding:0 1px;margin-left:-1px">Descrição completa</div>
<div class="t" style="left:20.70px;top:280px;font:11px 'Liberation Sans', sans-serif;line-height:13px;color:#000;transform:scaleX(0.8971);transform-origin:0 0;">RENDIMENTO DECORRENTE DO TRABALHO COM VINCULO EMPREGATICIO</div>
<div class="t" style="left:16.20px;top:340px;font:bold 11px 'Liberation Sans', sans-serif;line-height:13px;color:#000;transform:scaleX(0.9336);transform-origin:0 0;background:#f0f0f0;padding:0 1px;margin-left:-1px">Indicativos do Tipo de Dedução</div>
<div class="t" style="left:21.00px;top:360px;font:11px 'Liberation Sans', sans-serif;line-height:13px;color:#000;transform:scaleX(0.9400);transform-origin:0 0;">Cód.</div>
<div class="t" style="left:50.00px;top:360px;font:11px 'Liberation Sans', sans-serif;line-height:13px;color:#000;transform:scaleX(0.9533);transform-origin:0 0;">Descrição</div>
<div class="t" style="left:29.00px;top:378px;font:11px 'Liberation Sans', sans-serif;line-height:13px;color:#000;">1</div>
<div class="t" style="left:51.00px;top:378px;font:11px 'Liberation Sans', sans-serif;line-height:13px;color:#000;transform:scaleX(0.9244);transform-origin:0 0;">PREVIDENCIA OFICIAL</div>
<div class="t" style="left:29.00px;top:396px;font:11px 'Liberation Sans', sans-serif;line-height:13px;color:#000;">2</div>
<div class="t" style="left:51.00px;top:396px;font:11px 'Liberation Sans', sans-serif;line-height:13px;color:#000;transform:scaleX(0.9104);transform-origin:0 0;">PREVIDENCIA PRIVADA</div>
<div class="t" style="left:29.00px;top:414px;font:11px 'Liberation Sans', sans-serif;line-height:13px;color:#000;">3</div>
<div class="t" style="left:51.00px;top:414px;font:11px 'Liberation Sans', sans-serif;line-height:13px;color:#000;transform:scaleX(0.9204);transform-origin:0 0;">FUNDO DE APOSENTADORIA PROGRAMADA INDIVIDUAL - FAPI</div>
<div class="t" style="left:16.20px;top:444px;font:bold 11px 'Liberation Sans', sans-serif;line-height:13px;color:#000;transform:scaleX(0.9431);transform-origin:0 0;background:#f0f0f0;padding:0 1px;margin-left:-1px">Indicativos do Tipo de Isenção</div>
<div class="t" style="left:21.00px;top:464px;font:11px 'Liberation Sans', sans-serif;line-height:13px;color:#000;transform:scaleX(0.9400);transform-origin:0 0;">Cód.</div>
<div class="t" style="left:50.00px;top:464px;font:11px 'Liberation Sans', sans-serif;line-height:13px;color:#000;transform:scaleX(0.9533);transform-origin:0 0;">Descrição</div>
<div class="t" style="left:29.00px;top:482px;font:11px 'Liberation Sans', sans-serif;line-height:13px;color:#000;">2</div>
<div class="t" style="left:51.00px;top:482px;font:11px 'Liberation Sans', sans-serif;line-height:13px;color:#000;transform:scaleX(0.9276);transform-origin:0 0;">DIARIA DE VIAGEM</div>
<div class="t" style="left:29.00px;top:500px;font:11px 'Liberation Sans', sans-serif;line-height:13px;color:#000;">3</div>
<div class="t" style="left:50.09px;top:500px;font:11px 'Liberation Sans', sans-serif;line-height:13px;color:#000;transform:scaleX(0.9067);transform-origin:0 0;">INDENIZACAO E RESCISAO DE CONTRATO, INCLUSIVE A TITULO DE PDV E ACIDENTES DE TRABALHO</div>
<div class="t" style="left:29.00px;top:518px;font:11px 'Liberation Sans', sans-serif;line-height:13px;color:#000;">4</div>
<div class="t" style="left:51.00px;top:518px;font:11px 'Liberation Sans', sans-serif;line-height:13px;color:#000;transform:scaleX(0.9142);transform-origin:0 0;">ABONO PECUNIARIO</div>
<div class="t" style="left:712.50px;top:260px;font:bold 11px 'Liberation Sans', sans-serif;line-height:13px;color:#000;transform:scaleX(0.9148);transform-origin:0 0;background:#f0f0f0;padding:0 1px;margin-left:-1px">Códigos de Receita Relacionados</div>
<div class="t" style="left:715.00px;top:280px;font:11px 'Liberation Sans', sans-serif;line-height:13px;color:#000;transform:scaleX(0.9480);transform-origin:0 0;">Cód.Receita</div>
<div class="t" style="left:795.96px;top:280px;font:11px 'Liberation Sans', sans-serif;line-height:13px;color:#000;transform:scaleX(0.9514);transform-origin:0 0;">Tributo</div>
<div class="t" style="left:855.05px;top:280px;font:11px 'Liberation Sans', sans-serif;line-height:13px;color:#000;transform:scaleX(0.9000);transform-origin:0 0;">EX.</div>
<div class="t" style="left:887.48px;top:280px;font:11px 'Liberation Sans', sans-serif;line-height:13px;color:#000;transform:scaleX(0.9360);transform-origin:0 0;">Ind.Cl.85</div>
<div class="t" style="left:946.73px;top:280px;font:11px 'Liberation Sans', sans-serif;line-height:13px;color:#000;transform:scaleX(0.9514);transform-origin:0 0;">Período</div>
<div class="t" style="left:741.41px;top:298px;font:11px 'Liberation Sans', sans-serif;line-height:13px;color:#000;">047304</div>
<div class="t" style="left:800.15px;top:298px;font:11px 'Liberation Sans', sans-serif;line-height:13px;color:#000;transform:scaleX(0.9000);transform-origin:0 0;">IRPF</div>
<div class="t" style="left:854.27px;top:298px;font:11px 'Liberation Sans', sans-serif;line-height:13px;color:#000;transform:scaleX(0.9000);transform-origin:0 0;">SIM</div>
<div class="t" style="left:947.75px;top:298px;font:11px 'Liberation Sans', sans-serif;line-height:13px;color:#000;transform:scaleX(0.9000);transform-origin:0 0;">DIARIO</div>
<div class="t" style="left:742.23px;top:316px;font:11px 'Liberation Sans', sans-serif;line-height:13px;color:#000;">056114</div>
<div class="t" style="left:800.15px;top:316px;font:11px 'Liberation Sans', sans-serif;line-height:13px;color:#000;transform:scaleX(0.9000);transform-origin:0 0;">IRPF</div>
<div class="t" style="left:852.07px;top:316px;font:11px 'Liberation Sans', sans-serif;line-height:13px;color:#000;transform:scaleX(0.9000);transform-origin:0 0;">NAO</div>
<div class="t" style="left:944.70px;top:316px;font:11px 'Liberation Sans', sans-serif;line-height:13px;color:#000;transform:scaleX(0.9000);transform-origin:0 0;">MENSAL</div>
<div class="t" style="left:741.41px;top:334px;font:11px 'Liberation Sans', sans-serif;line-height:13px;color:#000;">188902</div>
<div class="t" style="left:801.25px;top:334px;font:11px 'Liberation Sans', sans-serif;line-height:13px;color:#000;transform:scaleX(0.9000);transform-origin:0 0;">RRA</div>
<div class="t" style="left:852.07px;top:334px;font:11px 'Liberation Sans', sans-serif;line-height:13px;color:#000;transform:scaleX(0.9000);transform-origin:0 0;">NAO</div>
<div class="t" style="left:944.70px;top:334px;font:11px 'Liberation Sans', sans-serif;line-height:13px;color:#000;transform:scaleX(0.9000);transform-origin:0 0;">MENSAL</div>
<div class="t" style="left:436.80px;top:571px;font:bold 11.5px 'Liberation Sans', sans-serif;line-height:13px;color:#000;transform:scaleX(1.0113);transform-origin:0 0;">Confirmar</div>
<div class="t" style="left:545.30px;top:571px;font:bold 11.5px 'Liberation Sans', sans-serif;line-height:13px;color:#000;transform:scaleX(1.0402);transform-origin:0 0;">Retornar</div>
<div class="t" style="left:916.70px;top:564.5px;font:bold 11px 'Liberation Sans', sans-serif;line-height:13px;color:#000;transform:scaleX(0.9268);transform-origin:0 0;">Consultar por</div>
<div class="t" style="left:906.60px;top:575.5px;font:bold 11px 'Liberation Sans', sans-serif;line-height:13px;color:#000;transform:scaleX(0.9056);transform-origin:0 0;">Código de Receita</div>
<svg style="position:absolute;left:0;top:0" width="1016" height="597" viewBox="0 0 1016 597">
<defs>
<linearGradient id="tico" x1="0" y1="0" x2="0" y2="1"><stop offset="0" stop-color="#0f4e93"/><stop offset="1" stop-color="#023366"/></linearGradient>
<linearGradient id="rico" x1="0" y1="0" x2="1" y2="1"><stop offset="0" stop-color="#3d86f5"/><stop offset="0.5" stop-color="#0b4fd6"/><stop offset="1" stop-color="#00258f"/></linearGradient>
<linearGradient id="fold" x1="0" y1="0" x2="0" y2="1"><stop offset="0" stop-color="#fff3c0"/><stop offset="1" stop-color="#f5cf58"/></linearGradient>
</defs>
<!-- title icon -->
<rect x="2" y="2" width="18" height="18" fill="#fafafa"/>
<rect x="3" y="3" width="16" height="16" fill="url(#tico)"/>
<g fill="#d3e1ee">
<path d="M4.9 5.5 L6.1 5.3 L10.6 7.8 L10.6 8.8 L9.8 8.9 L5.1 6.6 Z"/>
<path d="M16.9 5.5 L15.7 5.3 L11.2 7.8 L11.2 8.8 L12.0 8.9 L16.7 6.6 Z"/>
<ellipse cx="10.9" cy="5.7" rx="1.1" ry="1.3" fill-opacity="0.8"/>
<path d="M8.3 8.6 Q10.9 7.6 13.6 8.6 L13.2 10.6 L8.7 10.6 Z"/>
<path d="M9.4 11.0 L12.5 11.0 L12.9 12.4 L8.9 12.4 Z" fill-opacity="0.85"/>
<path d="M9.0 12.8 L12.9 12.8 L12.4 14.1 L9.5 14.1 Z"/>
<path d="M9.9 14.4 L12.0 14.4 L11.6 15.8 L10.3 15.8 Z" fill-opacity="0.85"/>
</g>
<!-- close X -->
<path d="M996.5 6.5 L1006 16 M1006 6.5 L996.5 16" stroke="#707070" stroke-width="1.1" fill="none"/>
<!-- red boxes -->
<g fill="none" stroke="#ff0000" stroke-width="3">
<rect x="19.5" y="117.5" width="51" height="16" rx="0.8"/>
<rect x="926.5" y="117.5" width="77" height="16" rx="0.8"/>
<rect x="875.5" y="562.5" width="132" height="28" rx="1.2"/>
</g>
<!-- arrows -->
<g stroke="#ff0000" stroke-width="3.1" stroke-linecap="round" fill="none">
<line x1="15.6" y1="70" x2="72" y2="97.8"/>
<line x1="872.3" y1="76.8" x2="917" y2="101.5"/>
<line x1="812.4" y1="533.5" x2="854" y2="562"/>
</g>
<g fill="#ff0000">
<polygon points="81.8,102.6 71.4,92.0 67.2,100.4"/>
<polygon points="927,106.2 917.2,95.5 912.0,103.9"/>
<polygon points="863.2,568 854.2,556.8 848.6,564.2"/>
</g>
<!-- confirmar icon -->
<g>
<path d="M417.5 583.5 L417.5 575 Q417.5 572.5 420 572.5 L423 572.5 L423 576.5 L431.5 576.5 L431.5 583.5 Z" fill="url(#fold)" stroke="#c99a1c" stroke-width="1"/>
<rect x="420.5" y="577.5" width="10" height="5.5" fill="#fce592" stroke="#dcb440" stroke-width="0.8"/>
<rect x="422.5" y="571.5" width="7" height="7" fill="#fff" stroke="#1a3fb0" stroke-width="1.1"/>
<path d="M423.6 574.4 L426.3 577 L429.5 572.6 L430.6 571.6 L432.4 569.6" fill="none" stroke="#ff3b12" stroke-width="1.3"/>
</g>
<!-- retornar icon -->
<g>
<path d="M527 570 L539 570 L540 571 L540 583 L539 584 L527 584 L526 583 L526 571 Z" fill="url(#rico)"/>
<path d="M527.5 571 L538 571 L527.5 577 Z" fill="#5a9cff" fill-opacity="0.35"/>
<path d="M532 572.2 L528.8 575 L532 577.8 Z" fill="#fff"/>
<path d="M531.5 575 L534.6 575 Q537.3 575 537.3 577.3 Q537.3 579.7 534.6 579.7 L531.8 579.7" fill="none" stroke="#fff" stroke-width="1.3"/>
</g>
<!-- green refresh icon -->
<g stroke="#3f8f0c" stroke-width="1" fill="#a8dc2c" stroke-linejoin="round">
<path d="M887.4 575.2 Q888 570.8 892 570.6 L895.8 570.6 L895.8 568.2 L899.8 572 L895.8 575.4 L895.8 573.4 L892 573.4 Q889.6 573.4 887.4 575.2 Z"/>
<path d="M901.6 575.8 Q901 580 897 580.2 L893 580.2 L893 582.6 L889.2 578.9 L893 575.4 L893 577.4 L897 577.4 Q899.4 577.4 901.6 575.8 Z"/>
</g>
</svg>

</body></html>
